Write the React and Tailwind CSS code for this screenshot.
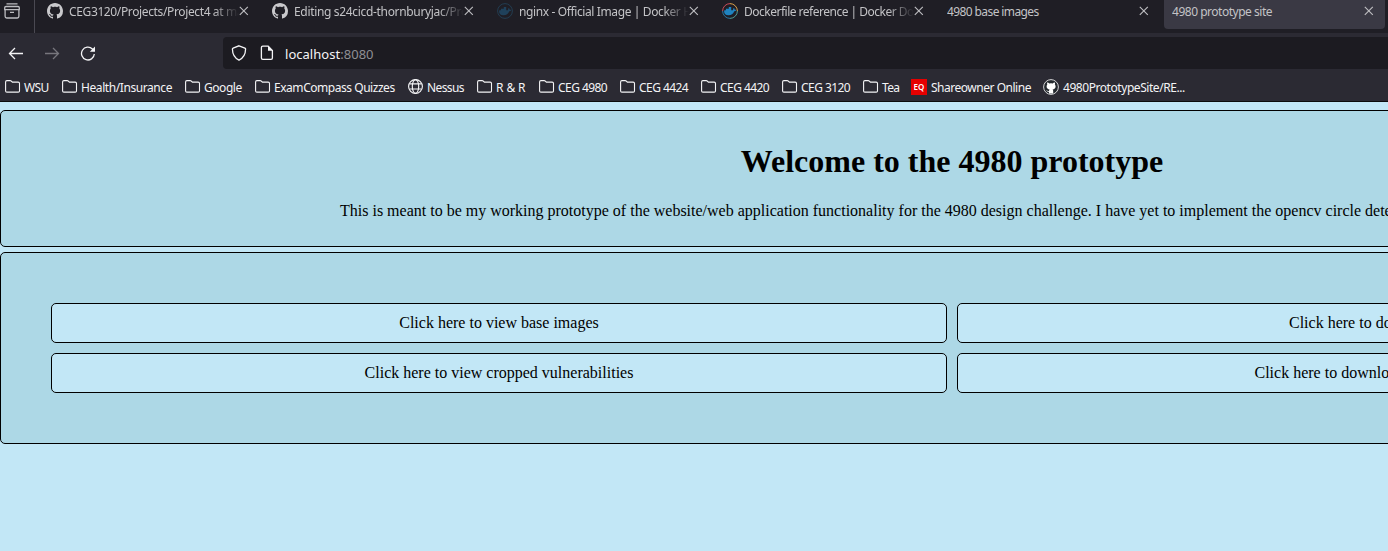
import React from 'react';

const GITHUB =
  'M8 0C3.58 0 0 3.58 0 8c0 3.54 2.29 6.53 5.47 7.59.4.07.55-.17.55-.38 0-.19-.01-.82-.01-1.49-2.01.37-2.53-.49-2.69-.94-.09-.23-.48-.94-.82-1.13-.28-.15-.68-.52-.01-.53.63-.01 1.08.58 1.23.82.72 1.21 1.87.87 2.33.66.07-.52.28-.87.51-1.07-1.78-.2-3.64-.89-3.64-3.95 0-.87.31-1.59.82-2.15-.08-.2-.36-1.02.08-2.12 0 0 .67-.21 2.2.82.64-.18 1.32-.27 2-.27s1.36.09 2 .27c1.53-1.04 2.2-.82 2.2-.82.44 1.1.16 1.92.08 2.12.51.56.82 1.27.82 2.15 0 3.07-1.87 3.75-3.65 3.95.29.25.54.73.54 1.48 0 1.07-.01 1.93-.01 2.2 0 .21.15.46.55.38A8.01 8.01 0 0 0 16 8c0-4.42-3.58-8-8-8z';

function Github() {
  return (
    <svg className="size-4 shrink-0" viewBox="0 0 16 16" fill="#c9c9cc">
      <path d={GITHUB} />
    </svg>
  );
}

function GithubBadge() {
  return (
    <svg className="size-4 shrink-0" viewBox="0 0 16 16">
      <circle cx="8" cy="8" r="7.4" fill="#24292e" stroke="#d4d4d6" strokeWidth="1" />
      <path
        d="M4.2 3.600c.9 0 1.5.5 1.9.8a7 7 0 0 1 3.800 0c.4-.3 1-.8 1.900-.8.300.8.300 1.500.1 2 .5.600.7 1.100.7 1.900 0 2-1.300 2.700-3 2.900.4.4.6.9.6 1.500V14.600H6V12.800c-1.500.3-2-.5-2.400-1.200l-.7-.7c1-.1 1.300.9 2 1.100.5.1.8 0 1.100-.1 0-.6.3-1.200.6-1.500-1.700-.2-3-1-3-2.900 0-.8.3-1.400.7-1.900-.3-.6-.3-1.300-.1-2z"
        fill="#fff"
      />
    </svg>
  );
}

function Docker({ faded }) {
  return (
    <svg className={faded ? 'size-4 shrink-0 opacity-35' : 'size-4 shrink-0'} viewBox="0 0 16 16" fill="none">
      <g strokeWidth="1">
        <path d="M8 .6A7.4 7.4 0 0 1 15.4 8" stroke={faded ? '#2774a0' : '#d9a04c'} />
        <path d="M15.4 8A7.4 7.4 0 0 1 8 15.4" stroke={faded ? '#2774a0' : '#4f9c96'} />
        <path d="M8 15.4A7.4 7.4 0 0 1 .6 8" stroke="#2774a0" />
        <path d="M.6 8A7.4 7.4 0 0 1 8 .6" stroke={faded ? '#2774a0' : '#c74a59'} />
      </g>
      <path
        d="M2.400 7.300H3.900V5.700H6.800V3.900H9.200V7.200H11C11 6.200 11.200 5.600 11.800 5.100 12.500 5.600 12.700 6.200 12.700 6.700 13.400 6.600 13.900 6.700 14.300 7 13.900 7.900 13.100 8.300 12.200 8.300 11.300 10.900 9.400 12.300 6.400 12.300 3.600 12.300 2.100 10.700 2.100 8.200z"
        fill="#1f83c0"
      />
    </svg>
  );
}

function Folder() {
  return (
    <svg className="size-4 shrink-0" viewBox="0 0 16 16" fill="none" stroke="#f4f4f6" strokeWidth="1.1">
      <path d="M.6 11.900V2.900C.6 2.100 1.100 1.600 1.900 1.600h3.300c.4 0 .7.1 1 .4l1.200 1.100h5.800c.8 0 1.300.5 1.300 1.300v7.500c0 .8-.5 1.200-1.300 1.200H1.900c-.8 0-1.300-.4-1.300-1.200z" />
    </svg>
  );
}

function Globe() {
  return (
    <svg className="size-4 shrink-0" viewBox="0 0 16 16" fill="none" stroke="#f4f4f6" strokeWidth="1.15">
      <circle cx="7.5" cy="7.5" r="6.9" />
      <ellipse cx="7.5" cy="7.5" rx="3.2" ry="6.9" />
      <path d="M1.500 4.800h12M1.500 10h12" />
    </svg>
  );
}

function Close() {
  return (
    <svg className="size-[10px] shrink-0" viewBox="0 0 10 10" stroke="#c0c0c3" strokeWidth="1.1">
      <path d="M.8.8l8 8M8.800.8l-8 8" />
    </svg>
  );
}

const tabs = [
  { icon: <Github />, label: 'CEG3120/Projects/Project4 at main', track: 'tracking-[-0.37px]', fade: true },
  { icon: <Github />, label: 'Editing s24cicd-thornburyjac/Project', track: 'tracking-[-0.33px]', fade: true },
  { icon: <Docker faded />, label: 'nginx - Official Image | Docker Hub', track: 'tracking-[-0.38px]', fade: true },
  { icon: <Docker />, label: 'Dockerfile reference | Docker Docs', track: 'tracking-[-0.5px]', fade: true },
  { label: '4980 base images', track: 'tracking-[-0.6px]' },
  { label: '4980 prototype site', track: 'tracking-[-0.48px]', active: true },
];

const bookmarks = [
  { w: 'w-[57px]', label: 'WSU', track: 'tracking-[-0.6px]' },
  { w: 'w-[123px]', label: 'Health/Insurance', track: 'tracking-[-0.42px]' },
  { w: 'w-[70px]', label: 'Google', track: 'tracking-[-0.45px]' },
  { w: 'w-[153px]', label: 'ExamCompass Quizzes', track: 'tracking-[-0.46px]' },
  { w: 'w-[69px]', label: 'Nessus', track: 'tracking-[-0.6px]', icon: <Globe /> },
  { w: 'w-[62px]', label: 'R & R', track: 'tracking-[-0.1px]' },
  { w: 'w-[81px]', label: 'CEG 4980', track: 'tracking-[-0.55px]' },
  { w: 'w-[81px]', label: 'CEG 4424', track: 'tracking-[-0.55px]' },
  { w: 'w-[81px]', label: 'CEG 4420', track: 'tracking-[-0.55px]' },
  { w: 'w-[81px]', label: 'CEG 3120', track: 'tracking-[-0.55px]' },
  { w: 'w-[48px]', label: 'Tea', track: 'tracking-[-0.7px]' },
  {
    w: 'w-[132px]',
    label: 'Shareowner Online',
    track: 'tracking-[-0.48px]',
    gap: 'gap-1',
    icon: (
      <span className="flex size-4 shrink-0 items-center justify-center bg-[#e60000] text-[8px] font-semibold leading-none text-white">
        EQ
      </span>
    ),
  },
  { w: 'w-[160px]', label: '4980PrototypeSite/RE...', track: 'tracking-[-0.44px]', gap: 'gap-1', icon: <GithubBadge /> },
];

function TabStrip() {
  return (
    <div className="flex h-[33px] bg-[#1f1e25]">
      <div className="h-[33px] w-[35px] shrink-0 border-r border-[#4a4952] pl-1 pt-[3px]">
        <svg className="size-4" viewBox="0 0 16 16" fill="none" stroke="#bcbcc0" strokeWidth="1.3">
          <path d="M2.500 .8h11M2 3.500h12c.8 0 1.300.5 1.300 1.200v2H.7v-2c0-.7.5-1.200 1.300-1.200zM1.100 6.700v6.600c0 1 .6 1.700 1.600 1.700h10.600c1 0 1.600-.7 1.600-1.700V6.700M6 9.300h4" />
        </svg>
      </div>
      <div className="flex pl-1">
        {tabs.map((tab) => (
          <div key={tab.label} className="w-[225px] shrink-0">
            <div
              className={
                tab.active
                  ? 'flex h-[29px] w-[221px] items-start rounded-b bg-[#3a3944] pl-2'
                  : 'flex h-[29px] w-[221px] items-start pl-2'
              }
            >
              {tab.icon && <span className="mr-1.5 mt-[3px]">{tab.icon}</span>}
              <span
                className={`mt-1 h-[18px] min-w-0 flex-1 overflow-hidden whitespace-nowrap text-[12px] leading-4 text-[#c3c3c6] ${tab.track} ${
                  tab.fade ? '[mask-image:linear-gradient(to_left,transparent,black_26px)]' : ''
                }`}
              >
                {tab.label}
              </span>
              <span className="mr-[11px] mt-1.5">
                <Close />
              </span>
            </div>
          </div>
        ))}
      </div>
    </div>
  );
}

function NavBar() {
  return (
    <div className="flex h-[37px] items-center pt-[3px]">
      <div className="flex w-[223px] shrink-0 items-center gap-5 pl-2">
        <svg className="size-4" viewBox="0 0 16 16" fill="none" stroke="#f4f4f6" strokeWidth="1.3">
          <path d="M15 8.500H1.500M7 3L1.500 8.500 7 14" />
        </svg>
        <svg className="size-4" viewBox="0 0 16 16" fill="none" stroke="#77767d" strokeWidth="1.3">
          <path d="M1 8.500h13.500M9 3L14.500 8.500 9 14" />
        </svg>
        <svg className="size-4" viewBox="0 0 16 16" fill="none" stroke="#f4f4f6" strokeWidth="1.3">
          <path d="M14.300 9A6.400 6.400 0 1 1 12.400 4L14 5.700" />
          <path d="M15 1.500v5.200H9.800z" fill="#f4f4f6" stroke="none" />
        </svg>
      </div>
      <div className="flex h-8 flex-1 items-center rounded-l bg-[#1c1b21] pl-2">
        <svg className="size-4" viewBox="0 0 16 16" fill="none" stroke="#f4f4f6" strokeWidth="1.3">
          <path d="M8 .8l5.900 2.300c.5.200.7.500.7 1-.1 4.800-1.600 8.800-6.600 11.100C3 12.900 1.500 8.900 1.400 4.100c0-.5.200-.8.700-1z" />
        </svg>
        <svg className="ml-3 size-4" viewBox="0 0 16 16" fill="none" stroke="#f4f4f6" strokeWidth="1.3">
          <path d="M3.800 1.200h5.400l4.200 4.200v7.600c0 .9-.5 1.400-1.400 1.400H3.800c-.9 0-1.400-.5-1.400-1.400V2.600c0-.9.5-1.400 1.400-1.400z" />
          <path d="M9 1v4.800h4.700z" fill="#f4f4f6" stroke="none" />
        </svg>
        <span className="ml-[10px] pt-[3px] text-[13px] leading-none tracking-[0.03px] text-[#f4f4f6]">
          localhost<span className="text-[#8f8f94]">:8080</span>
        </span>
      </div>
    </div>
  );
}

function Bookmarks() {
  return (
    <div className="flex h-8 items-start border-b border-[#0c0c0d] pl-[5px] pt-[9px]">
      {bookmarks.map((b) => (
        <div key={b.label} className={`flex shrink-0 items-start ${b.gap || 'gap-[3px]'} ${b.w}`}>
          {b.icon || <Folder />}
          <span className={`whitespace-nowrap pt-px text-[12px] leading-4 text-[#f4f4f6] ${b.track}`}>{b.label}</span>
        </div>
      ))}
    </div>
  );
}

function LinkBox({ children, pad }) {
  return (
    <div className={`h-10 whitespace-nowrap rounded-[5px] border border-black bg-[#c2e7f6] pt-[9px] text-[16px] leading-5 ${pad}`}>
      {children}
    </div>
  );
}

function Site() {
  return (
    <main className="h-[449px] overflow-hidden bg-[#c2e7f6] pt-2 font-['Liberation_Serif',serif] text-black">
      <section className="h-[137px] w-[1904px] rounded-[5px] border border-black bg-[#add8e6]">
        <h1 className="mt-8 text-center text-[32px] font-bold leading-[37px]">Welcome to the 4980 prototype</h1>
        <p className="mt-[22px] whitespace-nowrap pl-[339px] text-[16px] leading-[18px]">
          This is meant to be my working prototype of the website/web application functionality for the 4980 design
          challenge. I have yet to implement the opencv circle detection
        </p>
      </section>
      <section className="mt-[5px] grid h-[192px] w-[1904px] grid-cols-2 content-start gap-[10px] rounded-[5px] border border-black bg-[#add8e6] p-[50px]">
        <LinkBox pad="text-center">Click here to view base images</LinkBox>
        <LinkBox pad="pl-[331px]">Click here to download</LinkBox>
        <LinkBox pad="text-center">Click here to view cropped vulnerabilities</LinkBox>
        <LinkBox pad="pl-[296.5px]">Click here to download</LinkBox>
      </section>
    </main>
  );
}

export default function App() {
  return (
    <div className="h-[551px] w-[1388px] overflow-hidden bg-[#2b2a33] font-['Noto_Sans',sans-serif]">
      <TabStrip />
      <NavBar />
      <Bookmarks />
      <Site />
    </div>
  );
}
